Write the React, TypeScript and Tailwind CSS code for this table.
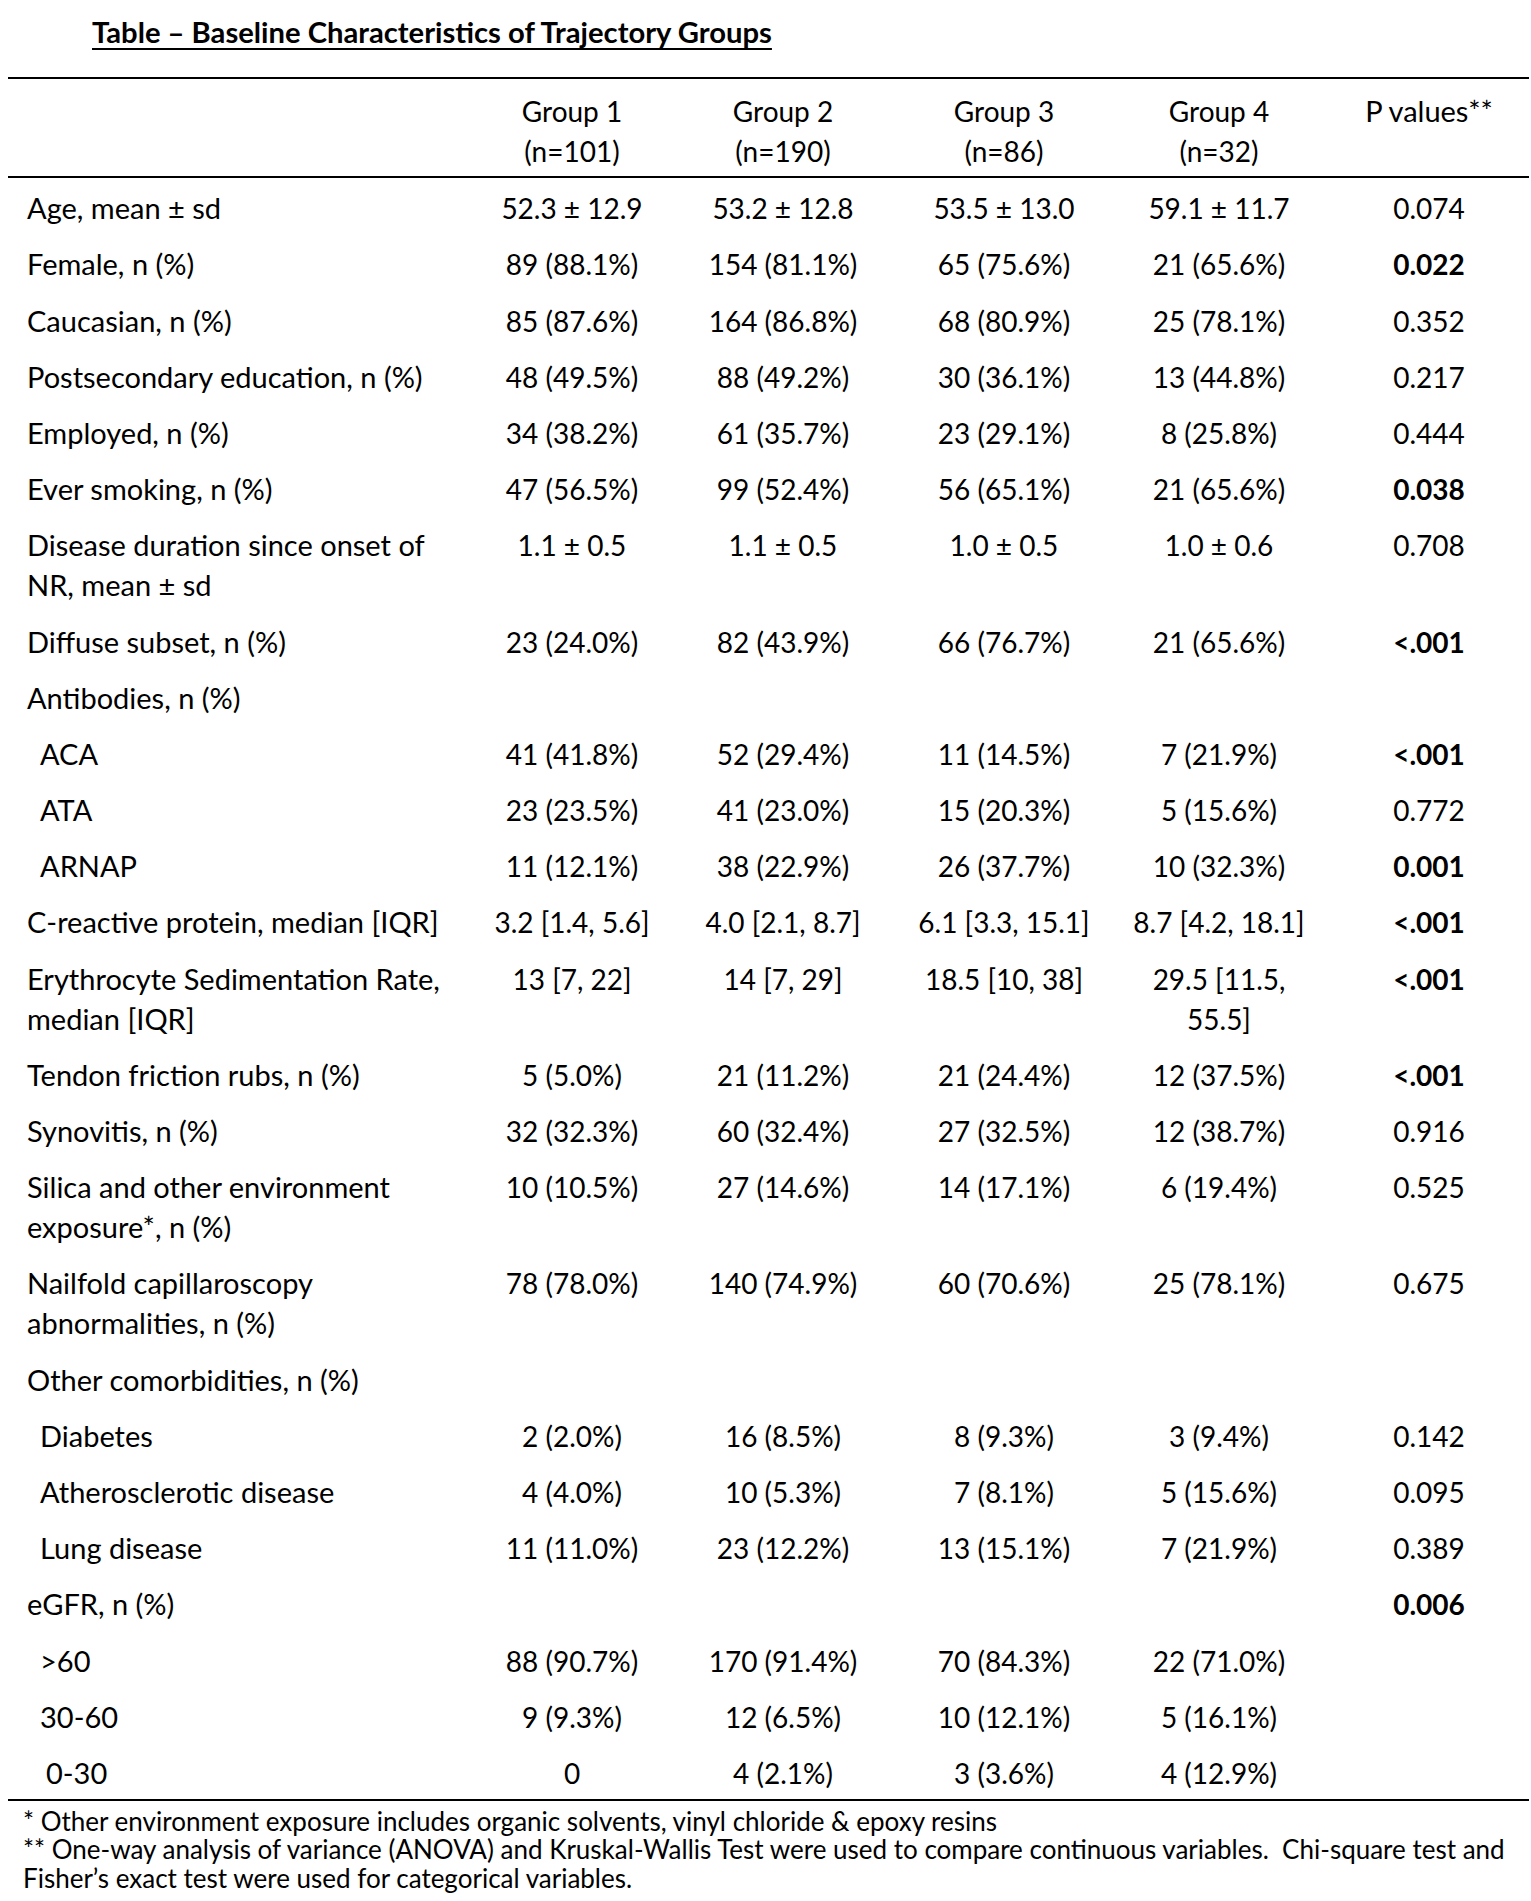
import React from "react";

type Row = {
  label: React.ReactNode;
  indent?: "sub" | "sub2";
  values?: React.ReactNode[];
  p?: string;
  bold?: boolean;
};

const rows: Row[] = [
  { label: "Age, mean ± sd", values: ["52.3 ± 12.9", "53.2 ± 12.8", "53.5 ± 13.0", "59.1 ± 11.7"], p: "0.074" },
  { label: "Female, n (%)", values: ["89 (88.1%)", "154 (81.1%)", "65 (75.6%)", "21 (65.6%)"], p: "0.022", bold: true },
  { label: "Caucasian, n (%)", values: ["85 (87.6%)", "164 (86.8%)", "68 (80.9%)", "25 (78.1%)"], p: "0.352" },
  { label: "Postsecondary education, n (%)", values: ["48 (49.5%)", "88 (49.2%)", "30 (36.1%)", "13 (44.8%)"], p: "0.217" },
  { label: "Employed, n (%)", values: ["34 (38.2%)", "61 (35.7%)", "23 (29.1%)", "8 (25.8%)"], p: "0.444" },
  { label: "Ever smoking, n (%)", values: ["47 (56.5%)", "99 (52.4%)", "56 (65.1%)", "21 (65.6%)"], p: "0.038", bold: true },
  {
    label: (
      <>
        Disease duration since onset of
        <br />
        NR, mean ± sd
      </>
    ),
    values: ["1.1 ± 0.5", "1.1 ± 0.5", "1.0 ± 0.5", "1.0 ± 0.6"],
    p: "0.708",
  },
  { label: "Diffuse subset, n (%)", values: ["23 (24.0%)", "82 (43.9%)", "66 (76.7%)", "21 (65.6%)"], p: "<.001", bold: true },
  { label: "Antibodies, n (%)" },
  { label: "ACA", indent: "sub", values: ["41 (41.8%)", "52 (29.4%)", "11 (14.5%)", "7 (21.9%)"], p: "<.001", bold: true },
  { label: "ATA", indent: "sub", values: ["23 (23.5%)", "41 (23.0%)", "15 (20.3%)", "5 (15.6%)"], p: "0.772" },
  { label: "ARNAP", indent: "sub", values: ["11 (12.1%)", "38 (22.9%)", "26 (37.7%)", "10 (32.3%)"], p: "0.001", bold: true },
  { label: "C-reactive protein, median [IQR]", values: ["3.2 [1.4, 5.6]", "4.0 [2.1, 8.7]", "6.1 [3.3, 15.1]", "8.7 [4.2, 18.1]"], p: "<.001", bold: true },
  {
    label: (
      <>
        Erythrocyte Sedimentation Rate,
        <br />
        median [IQR]
      </>
    ),
    values: [
      "13 [7, 22]",
      "14 [7, 29]",
      "18.5 [10, 38]",
      <>
        29.5 [11.5,
        <br />
        55.5]
      </>,
    ],
    p: "<.001",
    bold: true,
  },
  { label: "Tendon friction rubs, n (%)", values: ["5 (5.0%)", "21 (11.2%)", "21 (24.4%)", "12 (37.5%)"], p: "<.001", bold: true },
  { label: "Synovitis, n (%)", values: ["32 (32.3%)", "60 (32.4%)", "27 (32.5%)", "12 (38.7%)"], p: "0.916" },
  {
    label: (
      <>
        Silica and other environment
        <br />
        exposure*, n (%)
      </>
    ),
    values: ["10 (10.5%)", "27 (14.6%)", "14 (17.1%)", "6 (19.4%)"],
    p: "0.525",
  },
  {
    label: (
      <>
        Nailfold capillaroscopy
        <br />
        abnormalities, n (%)
      </>
    ),
    values: ["78 (78.0%)", "140 (74.9%)", "60 (70.6%)", "25 (78.1%)"],
    p: "0.675",
  },
  { label: "Other comorbidities, n (%)" },
  { label: "Diabetes", indent: "sub", values: ["2 (2.0%)", "16 (8.5%)", "8 (9.3%)", "3 (9.4%)"], p: "0.142" },
  { label: "Atherosclerotic disease", indent: "sub", values: ["4 (4.0%)", "10 (5.3%)", "7 (8.1%)", "5 (15.6%)"], p: "0.095" },
  { label: "Lung disease", indent: "sub", values: ["11 (11.0%)", "23 (12.2%)", "13 (15.1%)", "7 (21.9%)"], p: "0.389" },
  { label: "eGFR, n (%)", p: "0.006", bold: true },
  { label: ">60", indent: "sub", values: ["88 (90.7%)", "170 (91.4%)", "70 (84.3%)", "22 (71.0%)"] },
  { label: "30-60", indent: "sub", values: ["9 (9.3%)", "12 (6.5%)", "10 (12.1%)", "5 (16.1%)"] },
  { label: "0-30", indent: "sub2", values: ["0", "4 (2.1%)", "3 (3.6%)", "4 (12.9%)"] },
];

const grid = "grid grid-cols-[458px_212px_210px_232px_198px_1fr]";

const App = () => {
  return (
    <div className="min-h-[1901px] bg-white pt-[12px] font-[Lato,'Liberation_Sans',sans-serif] text-black">
      <h1 className="pl-[92px] text-[29.2px] font-bold leading-[40px] underline decoration-2 underline-offset-[5px]">
        Table – Baseline Characteristics of Trajectory Groups
      </h1>

      <div className="ml-[8px] mr-[2px] mt-[25px] border-y-2 border-black text-[28px] leading-[40px]">
        {/* header */}
        <div className={`${grid} border-b-2 border-black pb-[5px] pt-[12px] text-center`}>
          <div />
          <div>
            Group 1
            <br />
            (n=101)
          </div>
          <div>
            Group 2
            <br />
            (n=190)
          </div>
          <div>
            Group 3
            <br />
            (n=86)
          </div>
          <div>
            Group 4
            <br />
            (n=32)
          </div>
          <div className="pl-[11px] text-[29px]">P values**</div>
        </div>

        {rows.map((row, i) => (
          <div key={i} className={`${grid} pb-[6px] pt-[10.2px]`}>
            <div
              className={`text-[29px] ${
                row.indent === "sub" ? "pl-[32px]" : row.indent === "sub2" ? "pl-[38px]" : "pl-[19px]"
              }`}
            >
              {row.label}
            </div>
            {[0, 1, 2, 3].map((c) => (
              <div key={c} className="text-center">
                {row.values ? row.values[c] : null}
              </div>
            ))}
            <div className={`pl-[11px] text-center ${row.bold ? "font-bold" : ""}`}>{row.p}</div>
          </div>
        ))}
      </div>

      {/* footnotes */}
      <div className="mt-[6px] pl-[23px] text-[26px] leading-[28.5px]">
        <p>* Other environment exposure includes organic solvents, vinyl chloride &amp; epoxy resins</p>
        <p>
          ** One-way analysis of variance (ANOVA) and Kruskal-Wallis Test were used to compare continuous
          variables.{"\u00a0 "}Chi-square test and
          <br />
          Fisher’s exact test were used for categorical variables.
        </p>
      </div>
    </div>
  );
};

export default App;
